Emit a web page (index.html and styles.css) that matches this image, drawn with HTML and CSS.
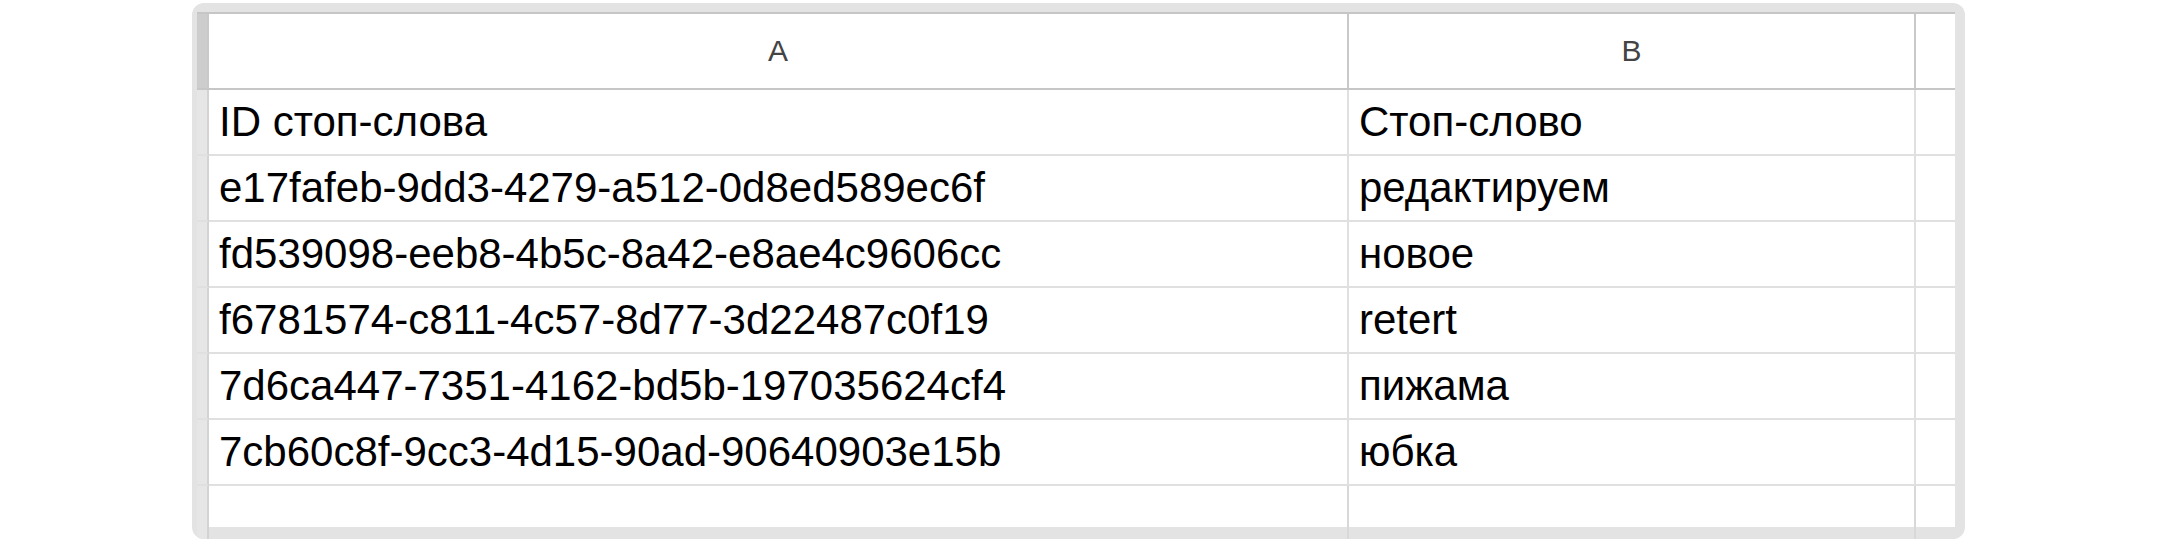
FILE: index.html
```html
<!DOCTYPE html>
<html lang="ru">
<head>
<meta charset="utf-8">
<title>Стоп-слова</title>
<link rel="stylesheet" href="styles.css">
</head>
<body>
<div class="frame">
  <div class="sheet">
    <div class="row head">
      <div class="rh corner"></div>
      <div class="col-h">A</div>
      <div class="col-h">B</div>
      <div class="col-h last"></div>
    </div>
    <div class="row body">
      <div class="rh"></div>
      <div class="cell">ID стоп-слова</div>
      <div class="cell">Стоп-слово</div>
      <div class="cell last"></div>
    </div>
    <div class="row body">
      <div class="rh"></div>
      <div class="cell">e17fafeb-9dd3-4279-a512-0d8ed589ec6f</div>
      <div class="cell">редактируем</div>
      <div class="cell last"></div>
    </div>
    <div class="row body">
      <div class="rh"></div>
      <div class="cell">fd539098-eeb8-4b5c-8a42-e8ae4c9606cc</div>
      <div class="cell">новое</div>
      <div class="cell last"></div>
    </div>
    <div class="row body">
      <div class="rh"></div>
      <div class="cell">f6781574-c811-4c57-8d77-3d22487c0f19</div>
      <div class="cell">retert</div>
      <div class="cell last"></div>
    </div>
    <div class="row body">
      <div class="rh"></div>
      <div class="cell">7d6ca447-7351-4162-bd5b-197035624cf4</div>
      <div class="cell">пижама</div>
      <div class="cell last"></div>
    </div>
    <div class="row body">
      <div class="rh"></div>
      <div class="cell">7cb60c8f-9cc3-4d15-90ad-90640903e15b</div>
      <div class="cell">юбка</div>
      <div class="cell last"></div>
    </div>
    <div class="row body end">
      <div class="rh"></div>
      <div class="cell"></div>
      <div class="cell"></div>
      <div class="cell last"></div>
    </div>
  </div>
</div>
</body>
</html>
```
FILE: styles.css
```css
* { box-sizing: border-box; }

html, body {
  margin: 0;
  background: #ffffff;
}

body {
  padding: 3px 0 0 192px;
  font-family: "Liberation Sans", Arial, sans-serif;
}

.frame {
  width: 1773px;
  background: #e3e3e3;
  border-radius: 12px;
  padding: 9px 10px 0 5px;
  overflow: hidden;
}

.sheet {
  display: flex;
  flex-direction: column;
}

.row {
  display: grid;
  grid-template-columns: 12px 1140px 567px 39px;
}

.head {
  height: 78px;
  border-top: 2px solid #c6c6c6;
  border-bottom: 2px solid #c6c6c6;
  background: #ffffff;
}

.head > div {
  border-right: 2px solid #c9c9c9;
}

.head > .last {
  border-right: none;
}

.rh {
  background: #e6e6e6;
  border-right: 2px solid #d3d3d3;
}

.rh.corner {
  background: #cdcdcd;
}

.col-h {
  display: flex;
  align-items: center;
  justify-content: center;
  font-size: 30px;
  color: #444444;
}

.body {
  height: 66px;
}

.body > div {
  border-bottom: 2px solid #e0e0e0;
}

.body > .cell {
  border-right: 2px solid #e0e0e0;
  background: #ffffff;
}

.body > .cell.last {
  border-right: none;
}

.cell {
  display: flex;
  align-items: center;
  padding-left: 10px;
  font-size: 42px;
  line-height: 48px;
  color: #000000;
  white-space: nowrap;
}

.body.end {
  height: 53px;
}

.body.end > div {
  border-bottom: none;
}

.body.end > .cell {
  background: linear-gradient(#ffffff 41px, #e3e3e3 41px);
  border-right-color: #d8d8d8;
}
```
